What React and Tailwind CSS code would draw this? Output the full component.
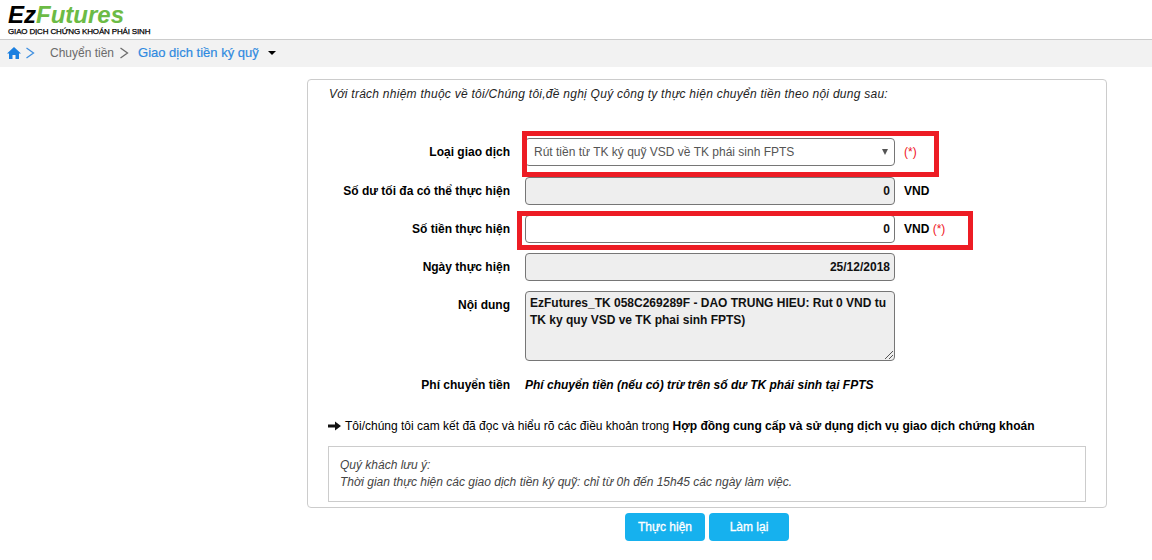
import React from "react";

function Row({ label, children, suffix, className = "", overlay }) {
  return (
    <div className={"relative flex items-center " + className}>
      <div className="w-[202px] shrink-0 text-right text-[12px] font-bold text-black">{label}</div>
      <div className="ml-[15px] w-[370px] shrink-0">{children}</div>
      {suffix && <div className="ml-[9px] text-[12px] font-bold text-black">{suffix}</div>}
      {overlay}
    </div>
  );
}

const fieldBase =
  "flex w-full items-center justify-end rounded-[4px] border border-[#767676] pb-[1px] pl-[5px] pr-[4px] text-[12px] font-bold text-[#111]";

export default function App() {
  return (
    <div className="min-h-[560px] w-[1152px] overflow-hidden bg-white font-['Liberation_Sans',Arial,sans-serif] text-[12px] text-black">
      <header className="h-[39px] pl-[8px] pt-[1px]">
        <div className="h-[25px] text-[24px] font-bold italic leading-[27px]">
          <span className="text-black">Ez</span>
          <span className="text-[#6cbb45]">Futures</span>
        </div>
        <div className="mt-[1px] whitespace-nowrap text-[8px] font-normal leading-[10px] tracking-[-0.16px] text-black [-webkit-text-stroke:0.25px_black]">
          GIAO DỊCH CHỨNG KHOÁN PHÁI SINH
        </div>
      </header>

      <nav className="flex h-[28px] items-center border-t border-[#cccccc] bg-[#f2f2f2] pb-[2px] pl-[7px] text-[12px] leading-none">
        <svg width="14" height="12" viewBox="0 0 14 12" className="shrink-0">
          <path d="M7 0 L14 6.5 H12 V12 H8.5 V8 H5.5 V12 H2 V6.5 H0 Z" fill="#1a7fe0" />
        </svg>
        <svg width="10" height="12" viewBox="0 0 10 12" className="ml-[4px] shrink-0">
          <path d="M1.5 1 L8.5 6 L1.5 11" fill="none" stroke="#3f8fe0" strokeWidth="1.3" />
        </svg>
        <span className="ml-[15px] text-[#6b6b6b]">Chuyển tiền</span>
        <svg width="10" height="12" viewBox="0 0 10 12" className="ml-[5px] shrink-0">
          <path d="M1.5 1 L8.5 6 L1.5 11" fill="none" stroke="#6b6b6b" strokeWidth="1.3" />
        </svg>
        <span className="ml-[9px] text-[13px] text-[#2f8ae0] [-webkit-text-stroke:0.2px_#2f8ae0]">Giao dịch tiền ký quỹ</span>
        <span className="ml-[9px] h-0 w-0 border-x-[4px] border-t-[4px] border-x-transparent border-t-black" />
      </nav>

      <main className="ml-[307px] mt-[12px] w-[800px]">
        <section className="h-[429px] rounded-[4px] border border-[#cccccc] pt-[7px]">
          <p className="ml-[21px] text-[12px] italic leading-[15px] tracking-[0.26px] text-[#222]">
            Với trách nhiệm thuộc về tôi/Chúng tôi,đề nghị Quý công ty thực hiện chuyển tiền theo nội dung sau:
          </p>

          <Row
            label="Loại giao dịch"
            className="mt-[36px]"
            suffix={<span className="font-normal text-[#f0141e]">(*)</span>}
            overlay={<div className="pointer-events-none absolute left-[214px] top-[-7px] h-[46px] w-[417px] border-[5px] border-[#ed1c24]" />}
          >
            <div className="flex h-[28px] items-center justify-between rounded-[4px] border border-[#767676] bg-white pl-[8px] pr-[6px] text-[12px] text-[#555]">
              <span>Rút tiền từ TK ký quỹ VSD về TK phái sinh FPTS</span>
              <span className="h-0 w-0 border-x-[3.5px] border-t-[6px] border-x-transparent border-t-[#555]" />
            </div>
          </Row>

          <Row label="Số dư tối đa có thể thực hiện" className="mt-[11px]" suffix="VND">
            <div className={fieldBase + " h-[28px] bg-[#eeeeee]"}>0</div>
          </Row>

          <Row
            label="Số tiền thực hiện"
            className="mt-[10px]"
            suffix={<>VND <span className="font-normal text-[#f0141e]">(*)</span></>}
            overlay={<div className="pointer-events-none absolute left-[209px] top-[-4px] h-[39px] w-[456px] border-[5px] border-[#ed1c24]" />}
          >
            <div className={fieldBase + " h-[28px] bg-white"}>0</div>
          </Row>

          <Row label="Ngày thực hiện" className="mt-[10px]">
            <div className={fieldBase + " h-[28px] bg-[#eeeeee]"}>25/12/2018</div>
          </Row>

          <div className="relative mt-[10px] flex items-start">
            <div className="mt-[7px] w-[202px] shrink-0 text-right text-[12px] font-bold leading-[14px]">Nội dung</div>
            <div className="relative ml-[15px] h-[70px] w-[370px] shrink-0 rounded-[4px] border border-[#767676] bg-[#eeeeee] pl-[4px] pr-[4px] pt-[3px] text-[12px] font-bold leading-[17px] text-[#111]">
              EzFutures_TK 058C269289F - DAO TRUNG HIEU: Rut 0 VND tu TK ky quy VSD ve TK phai sinh FPTS)
              <svg width="10" height="10" viewBox="0 0 10 10" className="absolute bottom-0 right-0">
                <path d="M1 9 L9 1 M5 9 L9 5" stroke="#555" strokeWidth="1" />
              </svg>
            </div>
          </div>

          <div className="mt-[15px] flex items-center">
            <div className="w-[202px] shrink-0 text-right text-[12px] font-bold">Phí chuyển tiền</div>
            <div className="ml-[15px] text-[12px] font-bold italic">Phí chuyển tiền (nếu có) trừ trên số dư TK phái sinh tại FPTS</div>
          </div>

          <p className="ml-[20px] mt-[25px] flex items-center text-[12px] leading-[14px]">
            <svg width="13" height="10" viewBox="0 0 13 10" className="mr-[4px] shrink-0">
              <path d="M0 3.5 H7 V0.5 L13 5 L7 9.5 V6.5 H0 Z" fill="#111" />
            </svg>
            <span>Tôi/chúng tôi cam kết đã đọc và hiểu rõ các điều khoản trong <b>Hợp đồng cung cấp và sử dụng dịch vụ giao dịch chứng khoán</b></span>
          </p>

          <div className="ml-[20px] mt-[13px] h-[56px] w-[758px] border border-[#cccccc] pl-[11px] pt-[10px] text-[12px] italic leading-[17px] text-[#444]">
            <div>Quý khách lưu ý:</div>
            <div>Thời gian thực hiện các giao dịch tiền ký quỹ: chỉ từ 0h đến 15h45 các ngày làm việc.</div>
          </div>
        </section>

        <div className="ml-[318px] mt-[5px] flex gap-[4px]">
          <button className="h-[28px] w-[80px] rounded-[4px] bg-[#16b1ee] text-[12px] font-normal text-white [-webkit-text-stroke:0.3px_white]">Thực hiện</button>
          <button className="h-[28px] w-[80px] rounded-[4px] bg-[#16b1ee] text-[12px] font-normal text-white [-webkit-text-stroke:0.3px_white]">Làm lại</button>
        </div>
      </main>
    </div>
  );
}
